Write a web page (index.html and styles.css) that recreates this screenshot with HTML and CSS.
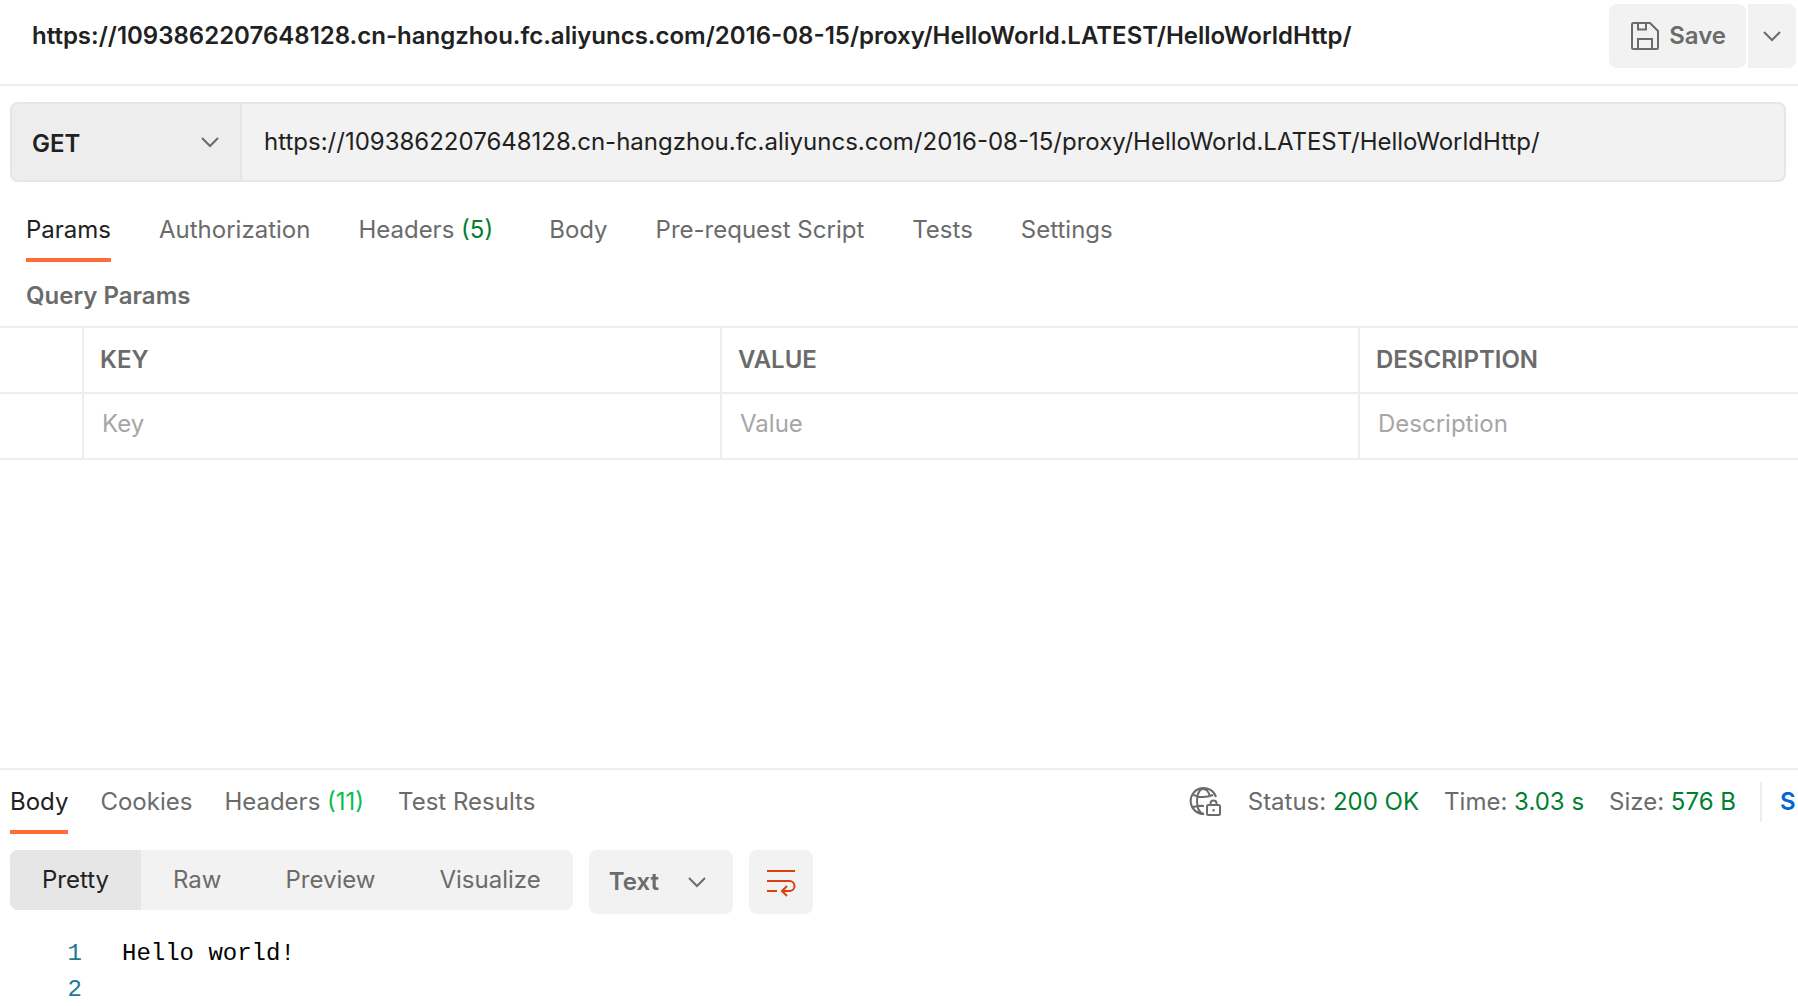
FILE: index.html
```html
<!DOCTYPE html>
<html lang="en">
<head>
<meta charset="utf-8">
<title>API request</title>
<link rel="stylesheet" href="styles.css">
</head>
<body>
<header class="topbar">
  <h1 class="request-name">https://1093862207648128.cn-hangzhou.fc.aliyuncs.com/2016-08-15/proxy/HelloWorld.LATEST/HelloWorldHttp/</h1>
  <div class="save-group">
    <button class="btn save" type="button">
      <svg class="icon" width="32" height="32" viewBox="0 0 32 32" aria-hidden="true"><path d="M3 4.5Q3 3 4.500 3H21L29 11V27.500Q29 29 27.500 29H4.500Q3 29 3 27.500ZM9 3V9.500H17V3M9 29V19H23V29"/></svg>
      <span>Save</span>
    </button>
    <button class="btn save-more" type="button" aria-label="More save options">
      <svg class="icon" width="20" height="12" viewBox="0 0 20 12" aria-hidden="true"><path d="M2 2L10 10L18 2"/></svg>
    </button>
  </div>
</header>

<main class="request">
  <form class="url-bar">
    <div class="picker method">
      <select aria-label="Method"><option>GET</option><option>POST</option></select>
      <svg class="icon" width="20" height="12" viewBox="0 0 20 12" aria-hidden="true"><path d="M2 2L10 10L18 2"/></svg>
    </div>
    <input class="url" type="text" aria-label="Request URL" value="https://1093862207648128.cn-hangzhou.fc.aliyuncs.com/2016-08-15/proxy/HelloWorld.LATEST/HelloWorldHttp/">
  </form>

  <nav class="tabs request-tabs">
    <button class="tab active" type="button">Params</button>
    <button class="tab" type="button">Authorization</button>
    <button class="tab counted" type="button">Headers <span class="count">(5)</span></button>
    <button class="tab" type="button">Body</button>
    <button class="tab" type="button">Pre-request Script</button>
    <button class="tab" type="button">Tests</button>
    <button class="tab" type="button">Settings</button>
  </nav>

  <h2 class="section-title">Query Params</h2>
  <table class="params">
    <colgroup><col class="col-check"><col class="col-key"><col class="col-value"><col></colgroup>
    <thead>
      <tr><td></td><th scope="col">KEY</th><th scope="col">VALUE</th><th scope="col">DESCRIPTION</th></tr>
    </thead>
    <tbody>
      <tr>
        <td></td>
        <td><input type="text" placeholder="Key" aria-label="Key"></td>
        <td><input type="text" placeholder="Value" aria-label="Value"></td>
        <td><input type="text" placeholder="Description" aria-label="Description"></td>
      </tr>
    </tbody>
  </table>
</main>

<section class="response">
  <div class="response-bar">
    <nav class="tabs response-tabs">
      <button class="tab active" type="button">Body</button>
      <button class="tab" type="button">Cookies</button>
      <button class="tab" type="button">Headers <span class="count bright">(11)</span></button>
      <button class="tab" type="button">Test Results</button>
    </nav>
    <div class="meta">
      <svg class="icon globe" width="32" height="32" viewBox="0 0 32 32" aria-hidden="true"><path d="M27 11A13 13 0 1 0 15 28M15 28C10 27 8 21 8 15S10 3 14 3C18 3 20 6 21 11M4.500 9Q14 13 24 9M4 21Q9 19.500 15 20M18 20.500Q18 19 19.500 19H29.500Q31 19 31 20.500V27.500Q31 29 29.500 29H19.500Q18 29 18 27.500ZM21.500 19V17.500A3 3 0 0 1 27.500 17.500V19M24.500 23V25.500"/></svg>
      <span class="stat">Status: <b>200 OK</b></span>
      <span class="stat">Time: <b>3.03 s</b></span>
      <span class="stat">Size: <b>576 B</b></span>
      <button class="save-response" type="button" aria-label="Save Response">S</button>
    </div>
  </div>

  <div class="view-bar">
    <div class="segments">
      <button class="segment active" type="button">Pretty</button>
      <button class="segment" type="button">Raw</button>
      <button class="segment" type="button">Preview</button>
      <button class="segment" type="button">Visualize</button>
    </div>
    <div class="picker format">
      <select aria-label="Format"><option>Text</option><option>JSON</option></select>
      <svg class="icon" width="20" height="12" viewBox="0 0 20 12" aria-hidden="true"><path d="M2 2L10 10L18 2"/></svg>
    </div>
    <button class="btn wrap" type="button" aria-label="Wrap lines">
      <svg class="icon" width="32" height="32" viewBox="0 0 32 32" aria-hidden="true"><path d="M2 5H30M2 15H24.500A5 5 0 0 1 24.500 25H17M2 25H12M22 20L17 25L22 30"/></svg>
    </button>
  </div>

  <div class="code">
    <div class="line"><span class="number">1</span><code>Hello world!</code></div>
    <div class="line"><span class="number">2</span><code></code></div>
  </div>
</section>
</body>
</html>
```
FILE: styles.css
```css
* { box-sizing: border-box; }

body {
  margin: 0;
  min-height: 100vh;
  display: flex;
  flex-direction: column;
  overflow-x: hidden;
  background: #fff;
  color: #212121;
  font: 400 24px/32px Inter, "Liberation Sans", sans-serif;
}

button, input, select {
  margin: 0;
  padding: 0;
  border: 0;
  background: none;
  color: inherit;
  font: inherit;
  outline: 0;
}

h1, h2 { margin: 0; font-size: 24px; font-weight: 600; line-height: 32px; }

.icon {
  flex: none;
  fill: none;
  stroke: #6b6b6b;
  stroke-width: 2;
}

.topbar {
  display: flex;
  justify-content: space-between;
  align-items: flex-start;
  padding: 4px 2px 16px 32px;
  border-bottom: 2px solid #ededed;
}
.request-name { padding-top: 16px; white-space: nowrap; }
.save-group { display: flex; gap: 2px; }
.btn {
  display: flex;
  align-items: center;
  justify-content: center;
  height: 64px;
  border-radius: 8px;
  background: #f2f2f2;
  color: #6b6b6b;
  font-weight: 600;
}
.save { gap: 8px; padding: 0 20px; }
.save-more { width: 48px; border-radius: 0 8px 8px 0; }

.request { flex: 1; }
.url-bar {
  display: flex;
  height: 80px;
  margin: 16px 12px 0 10px;
  border: 2px solid #e6e6e6;
  border-radius: 8px;
  background: #f2f2f2;
  overflow: hidden;
}
.picker { display: grid; align-items: center; font-weight: 600; }
.picker select, .picker .icon { grid-area: 1 / 1; }
.picker select { width: 100%; height: 100%; padding-left: 20px; appearance: none; }
.picker .icon { justify-self: end; margin-right: 20px; pointer-events: none; }
.method { width: 230px; border-right: 2px solid #e6e6e6; background: #ededed; }
.method select { padding-top: 4px; }
.url { flex: 1; padding: 0 22px; }

.tabs { display: flex; }
.tab {
  height: 56px;
  padding-bottom: 4px;
  border-bottom: 4px solid transparent;
  color: #6b6b6b;
  white-space: nowrap;
}
.tab.active { border-color: #ff6c37; color: #212121; }
.count { color: #007f31; }
.count.bright { padding-right: 2px; color: #0cbb52; }
.request-tabs { gap: 48px; padding: 24px 26px 0; }
.counted { padding-right: 8px; }

.section-title { padding: 18px 26px 14px; color: #6b6b6b; }
.params { width: 100%; border-collapse: collapse; table-layout: fixed; color: #6b6b6b; }
.params tr { height: 66px; border-top: 2px solid #ededed; }
.params tbody tr { border-bottom: 2px solid #ededed; }
.params th, .params td { padding: 0 16px; text-align: left; font-weight: 600; }
.params td + td, .params th { border-left: 2px solid #ededed; }
.params input { display: block; width: 100%; padding: 0 2px 4px; font-weight: 400; }
.params input::placeholder { color: #a6a6a6; }
.col-check { width: 83px; }
.col-key, .col-value { width: 638px; }

.response { flex: 0 0 238px; min-height: 0; border-top: 2px solid #ededed; overflow: hidden; }
.response-bar { display: flex; justify-content: space-between; padding: 8px 0 0 10px; }
.response-tabs { gap: 32px; }
.meta { display: flex; align-items: center; height: 48px; color: #6b6b6b; white-space: nowrap; }
.globe { margin-right: 2px; }
.stat { margin-left: 25px; }
.stat b { color: #007f31; font-weight: 400; }
.save-response {
  width: 38px;
  height: 40px;
  margin-left: 24px;
  padding-left: 18px;
  border-left: 2px solid #ededed;
  color: #0265d2;
  font-weight: 600;
  text-align: left;
}

.view-bar { display: flex; align-items: flex-start; gap: 16px; padding: 16px 10px; }
.segments { display: flex; border-radius: 8px; background: #f2f2f2; overflow: hidden; }
.segment { height: 60px; padding: 0 32px; color: #6b6b6b; }
.segment.active { background: #e6e6e6; color: #212121; }
.format { width: 144px; height: 64px; border-radius: 8px; background: #f2f2f2; color: #6b6b6b; }
.format .icon { margin-right: 26px; }
.wrap { width: 64px; }
.wrap .icon { stroke: #d9400b; }

.code { padding-top: 6px; font: 24px/36px "Liberation Mono", monospace; color: #000; }
.line { display: flex; gap: 40px; height: 36px; }
.number { width: 82px; color: #237893; text-align: right; }
.code code { font: inherit; }
```
